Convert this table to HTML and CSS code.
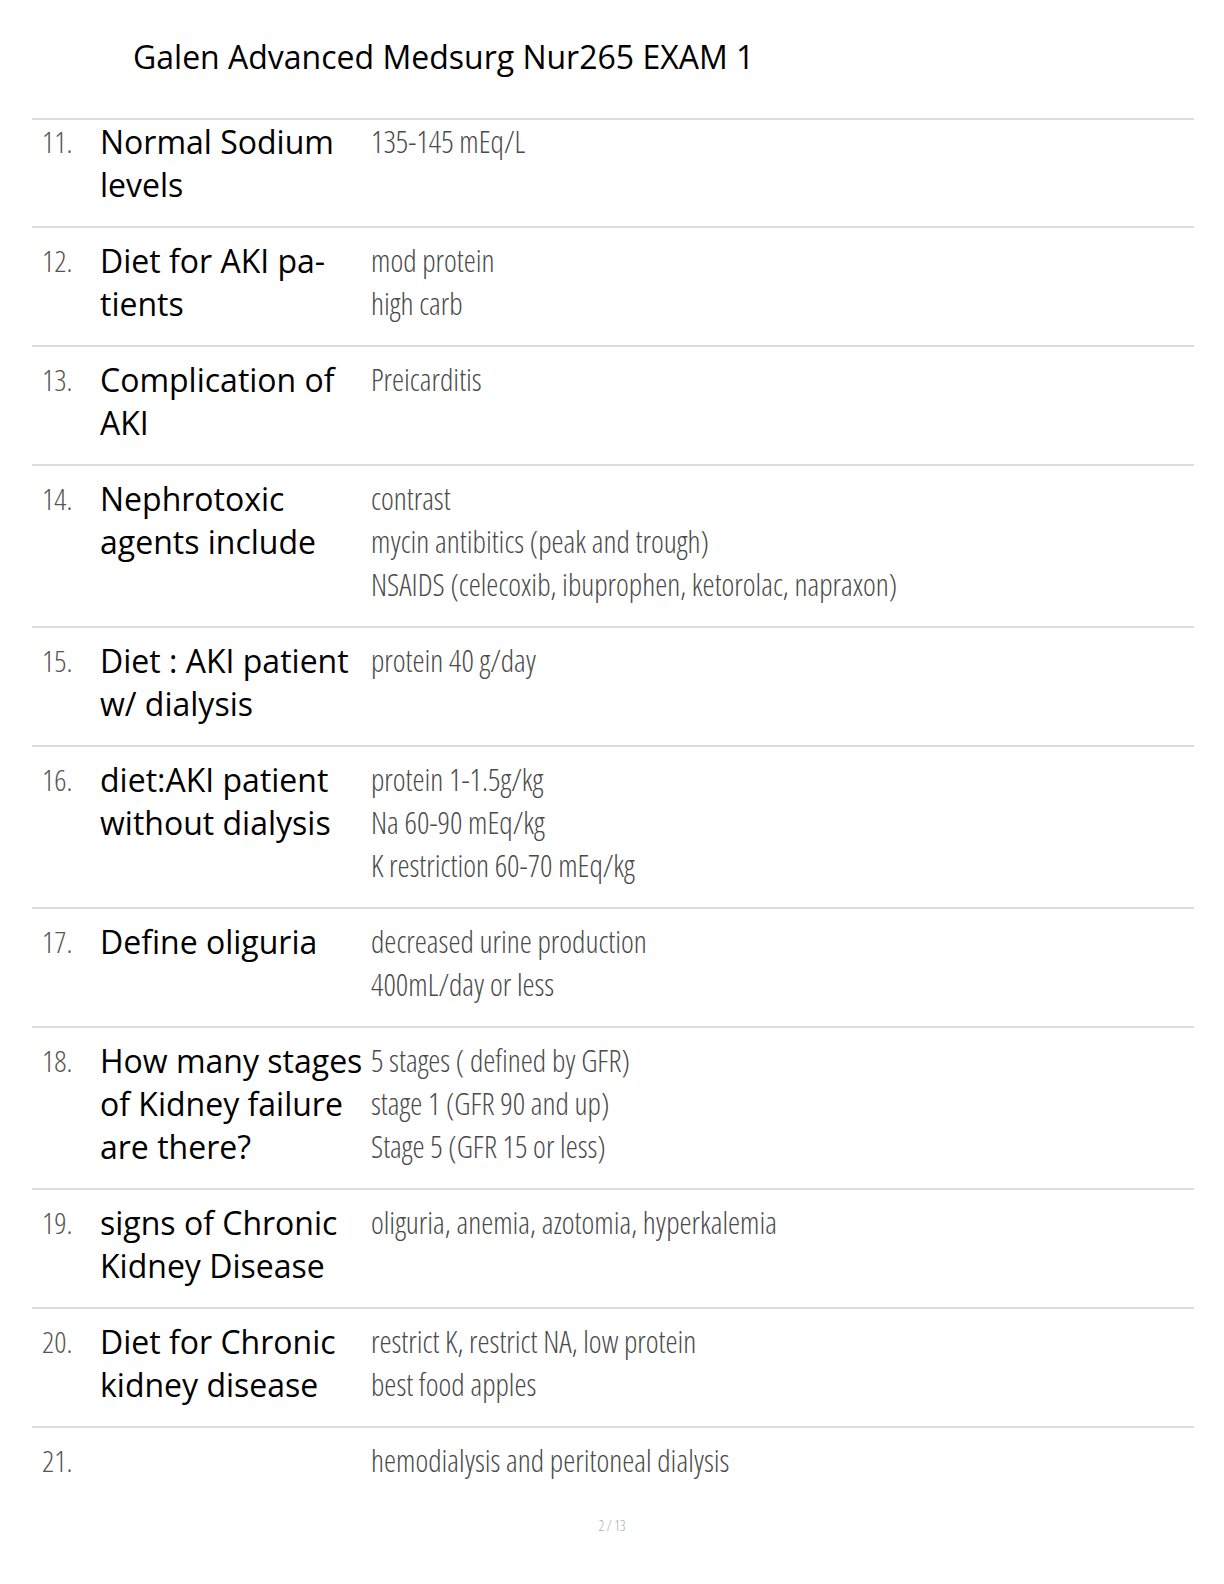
FILE: index.html
```html
<!DOCTYPE html>
<html>
<head>
<meta charset="utf-8">
<link rel="stylesheet" href="styles.css">
</head>
<body>
<div class="page">
  <h1 class="title">Galen Advanced Medsurg Nur265 EXAM 1</h1>
  <div class="table">
    <div class="row first">
      <div class="num">11.</div>
      <div class="q">Normal Sodium levels</div>
      <div class="a">135-145 mEq/L</div>
    </div>
    <div class="row">
      <div class="num">12.</div>
      <div class="q">Diet for AKI pa-<br>tients</div>
      <div class="a">mod protein<br>high carb</div>
    </div>
    <div class="row">
      <div class="num">13.</div>
      <div class="q">Complication of AKI</div>
      <div class="a">Preicarditis</div>
    </div>
    <div class="row">
      <div class="num">14.</div>
      <div class="q">Nephrotoxic agents include</div>
      <div class="a">contrast<br>mycin antibitics (peak and trough)<br>NSAIDS (celecoxib, ibuprophen, ketorolac, napraxon)</div>
    </div>
    <div class="row">
      <div class="num">15.</div>
      <div class="q">Diet : AKI patient w/ dialysis</div>
      <div class="a">protein 40 g/day</div>
    </div>
    <div class="row">
      <div class="num">16.</div>
      <div class="q">diet:AKI patient without dialysis</div>
      <div class="a">protein 1-1.5g/kg<br>Na 60-90 mEq/kg<br>K restriction 60-70 mEq/kg</div>
    </div>
    <div class="row">
      <div class="num">17.</div>
      <div class="q">Define oliguria</div>
      <div class="a">decreased urine production<br>400mL/day or less</div>
    </div>
    <div class="row">
      <div class="num">18.</div>
      <div class="q">How many stages of Kidney failure are there?</div>
      <div class="a">5 stages ( defined by GFR)<br>stage 1 (GFR 90 and up)<br>Stage 5 (GFR 15 or less)</div>
    </div>
    <div class="row">
      <div class="num">19.</div>
      <div class="q">signs of Chronic Kidney Disease</div>
      <div class="a">oliguria, anemia, azotomia, hyperkalemia</div>
    </div>
    <div class="row">
      <div class="num">20.</div>
      <div class="q">Diet for Chronic kidney disease</div>
      <div class="a">restrict K, restrict NA, low protein<br>best food apples</div>
    </div>
    <div class="row last">
      <div class="num">21.</div>
      <div class="q"></div>
      <div class="a">hemodialysis and peritoneal dialysis</div>
    </div>
  </div>
  <div class="pagenum">2 / 13</div>
</div>
</body>
</html>
```
FILE: styles.css
```css
html, body {
  margin: 0;
  padding: 0;
  background: #fff;
}
.page {
  width: 1224px;
  height: 1584px;
  position: relative;
  font-family: "Open Sans", "Noto Sans", sans-serif;
  color: #000;
}
.title {
  margin: 0;
  padding: 36px 0 0 133px;
  font-size: 32px;
  font-weight: 400;
  line-height: 42px;
  height: 82px;
}
.table {
  margin-left: 32px;
  width: 1162px;
}
.row {
  display: grid;
  grid-template-columns: 68px 271px 1fr;
  border-top: 2px solid #dcdcdc;
  padding: 11px 0 20px;
  line-height: 43px;
}
.row.first {
  padding-top: 0;
  padding-bottom: 20px;
}
.num {
  padding-left: 10px;
  font-size: 30px;
  font-weight: 300;
  font-stretch: condensed;
  color: #555;
}
.q {
  font-size: 32px;
  color: #000;
}
.a {
  font-size: 30.5px;
  font-weight: 300;
  font-stretch: condensed;
  color: #4a4a4a;
}
.pagenum {
  position: absolute;
  left: 0;
  right: 0;
  top: 1516px;
  text-align: center;
  font-size: 14px;
  font-weight: 300;
  font-stretch: condensed;
  color: #aaa;
}
```
